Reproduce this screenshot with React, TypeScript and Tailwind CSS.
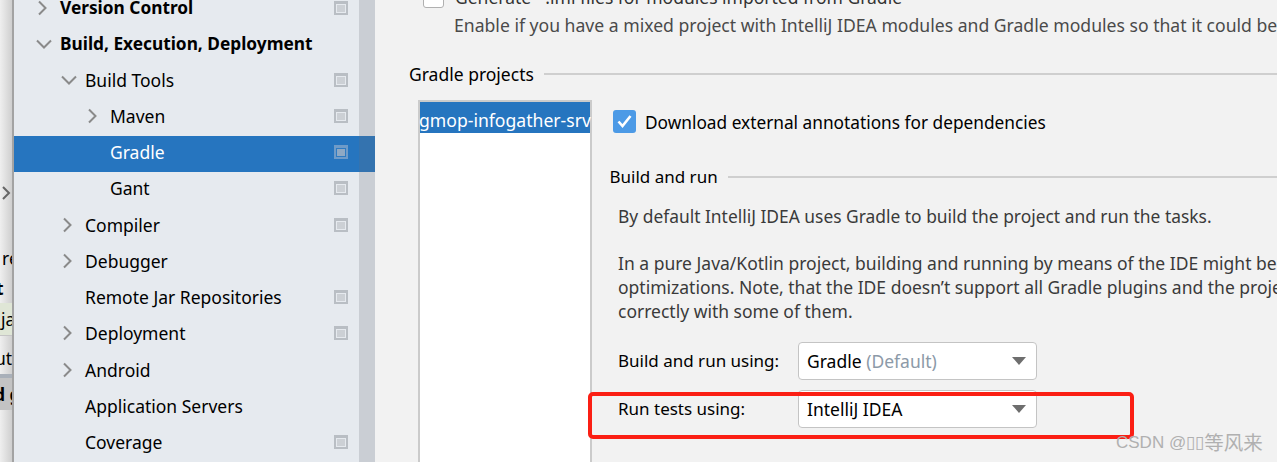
const font = "font-['Noto_Sans','Open_Sans',sans-serif]";

type Row = {
  label: string;
  indent: number;
  arrow?: "right" | "down";
  bold?: boolean;
  page?: boolean;
  selected?: boolean;
};

const rows: Row[] = [
  { label: "Version Control", indent: 0, arrow: "right", bold: true, page: true },
  { label: "Build, Execution, Deployment", indent: 0, arrow: "down", bold: true },
  { label: "Build Tools", indent: 1, arrow: "down", page: true },
  { label: "Maven", indent: 2, arrow: "right", page: true },
  { label: "Gradle", indent: 2, page: true, selected: true },
  { label: "Gant", indent: 2, page: true },
  { label: "Compiler", indent: 1, arrow: "right", page: true },
  { label: "Debugger", indent: 1, arrow: "right" },
  { label: "Remote Jar Repositories", indent: 1, page: true },
  { label: "Deployment", indent: 1, arrow: "right", page: true },
  { label: "Android", indent: 1, arrow: "right" },
  { label: "Application Servers", indent: 1 },
  { label: "Coverage", indent: 1, page: true },
];

function Arrow({ dir }: { dir: "right" | "down" }) {
  return (
    <svg width="18" height="16" viewBox="0 0 18 16" fill="none" stroke="#8a8a8a" strokeWidth="2">
      {dir === "right" ? <path d="M5 1.5l6.5 6.5-6.5 6.5" /> : <path d="M3 4.5l7 7 7-7" />}
    </svg>
  );
}

function PageIcon({ selected }: { selected?: boolean }) {
  return (
    <div className={`flex h-[14px] w-[14px] flex-col border-2 border-t-[3px] ${selected ? "border-[#6f9bc8] bg-[#2f7bc2]" : "border-[#b9bec4] bg-[#e6eaef]"}`}>
      <div className={`m-[1px] flex-1 ${selected ? "bg-[#8fa9c4]" : "bg-[#ccd0d5]"}`} />
    </div>
  );
}

function TreeRow({ row }: { row: Row }) {
  const pad = row.indent === 0 ? "pl-[20px]" : row.indent === 1 ? "pl-[45px]" : "pl-[70px]";
  return (
    <div className={`flex h-[36.25px] shrink-0 items-center ${row.bold ? "pb-[2px]" : "pb-[4px]"} ${pad} ${row.selected ? "bg-[#2675bf] text-white" : "text-black"}`}>
      <div className="flex w-[26px] shrink-0 items-center">{row.arrow && <Arrow dir={row.arrow} />}</div>
      <span className={`flex-1 whitespace-nowrap ${row.bold ? "text-[17.3px] font-bold" : ""}`}>{row.label}</span>
      {row.page && <div className="mr-[27px]"><PageIcon selected={row.selected} /></div>}
    </div>
  );
}

function Combo({ value, hint }: { value: string; hint?: string }) {
  return (
    <div className="flex h-[38px] w-[239px] items-center justify-between rounded-[4px] border border-[#c4c4c4] bg-white pl-[8px] pr-[10px] text-[17.5px] text-black">
      <span>
        {value}
        {hint && <span className="text-[#8c9aa8]"> {hint}</span>}
      </span>
      <div className="h-0 w-0 border-x-[7.5px] border-t-[8px] border-x-transparent border-t-[#6e6e6e]" />
    </div>
  );
}

function Titled({ title, className }: { title: string; className: string }) {
  return (
    <div className={`flex items-center gap-[10px] whitespace-nowrap ${className}`}>
      <span className="text-black">{title}</span>
      <div className="h-[2px] flex-1 bg-[#cfcfcf]" />
    </div>
  );
}

export default function App() {
  return (
    <div className={`relative flex h-[462px] w-[1277px] overflow-hidden bg-[#f2f2f2] text-[17.5px] leading-[24px] ${font}`}>
      {/* dimmed window behind the settings dialog */}
      <div className="flex w-[14px] shrink-0 flex-col overflow-hidden border-r-2 border-[#a3a3a3] bg-[linear-gradient(to_right,#efefef,#cfcfcf)] pt-[181px] text-black">
        <div className="flex h-[24px] w-full items-center">
          <svg width="12" height="16" viewBox="0 0 12 16" fill="none" stroke="#666" strokeWidth="2"><path d="M3 2l6 6-6 6" /></svg>
        </div>
        <div className="ml-[2px] mt-[41px] h-[24px] whitespace-nowrap">re</div>
        <div className="-ml-[4px] mt-[6px] h-[24px] whitespace-nowrap font-bold">t</div>
        <div className="mt-[3px] flex h-[33px] w-full shrink-0 items-center whitespace-nowrap border-b border-[#c5c5c5] bg-[#dfe6d6] pb-[1px]">
          <span className="ml-[1px]">ja</span>
        </div>
        <div className="-ml-[5px] mt-[10px] h-[24px] whitespace-nowrap">utp</div>
        <div className="mt-[4px] flex h-[36px] w-full shrink-0 items-center whitespace-nowrap border-t-[4px] border-[#a9b0b9] bg-[#c3c3c3] font-bold">
          <span className="-ml-[6px]">d g</span>
        </div>
      </div>

      {/* settings tree */}
      <div className="relative flex w-[361px] shrink-0 flex-col bg-[#e6eaef]">
        <div className="-mt-[9px] flex flex-col">
          {rows.map((row) => (
            <TreeRow key={row.label} row={row} />
          ))}
        </div>
        {/* scrollbar track lies over the rows */}
        <div className="absolute bottom-0 right-0 top-0 w-[16px] bg-[rgba(107,111,118,0.22)]" />
      </div>

      {/* gradle page */}
      <div className="relative flex min-w-0 flex-1 flex-col whitespace-nowrap pl-[34px] text-[#1a1a1a]">
        <div className="-mt-[15px] flex items-center gap-[11px] pl-[14px] text-[#333]">
          <div className="h-[21px] w-[21px] rounded-[3px] border border-[#b0b0b0] bg-white" />
          <span>Generate *.iml files for modules imported from Gradle</span>
        </div>
        <div className="pl-[45px] pt-[4px] text-[17.6px] text-[#4a4a4a]">Enable if you have a mixed project with IntelliJ IDEA modules and Gradle modules so that it could be shared with the team</div>

        <Titled title="Gradle projects" className="mt-[25px]" />

        <div className="mt-[14px] flex flex-1">
          <div className="ml-[9px] w-[174px] shrink-0 border-2 border-b-0 border-[#cbcbcb] bg-white">
            <div className="flex h-[31px] items-center bg-[#2675bf] pt-[4px] text-white"><span className="-ml-[1px] text-[17.6px]">gmop-infogather-srv</span></div>
          </div>

          <div className="flex min-w-0 flex-1 flex-col pl-[18px]">
            <div className="mt-[10px] flex items-start gap-[9px] pl-[3px]">
              <div className="flex h-[23px] w-[23px] items-center justify-center rounded-[3px] bg-[#4c9ae6]">
                <svg width="15" height="13" viewBox="0 0 15 13" fill="none" stroke="white" strokeWidth="2.6"><path d="M1.5 6.5l4 4.5 8-10" /></svg>
              </div>
              <span className="pt-[1px] text-[17.27px] text-black">Download external annotations for dependencies</span>
            </div>

            <Titled title="Build and run" className="mt-[30px] -ml-[0.5px] gap-[9px] text-[17px]" />

            <div className="pl-[8px] pt-[15px] text-[#3a3a3a]">
              <div className="text-[17.4px]">By default IntelliJ IDEA uses Gradle to build the project and run the tasks.</div>
              <div className="mt-[23px]">In a pure Java/Kotlin project, building and running by means of the IDE might be faster, thanks to</div>
              <div>optimizations. Note, that the IDE doesn’t support all Gradle plugins and the project might not work</div>
              <div>correctly with some of them.</div>

              <div className="mt-[19px] flex items-center text-[17px] text-black">
                <span className="w-[180px]">Build and run using:</span>
                <Combo value="Gradle" hint="(Default)" />
              </div>
              <div className="mt-[10px] flex items-center text-[17px] text-black">
                <span className="w-[180px]">Run tests using:</span>
                <Combo value="IntelliJ IDEA" />
              </div>
            </div>
          </div>
        </div>
      </div>

      {/* annotation drawn over the screenshot */}
      <div className="absolute left-[588px] top-[392px] h-[47px] w-[546px] rounded-[5px] border-[4px] border-[#fb1f14]" />
      <div className="absolute left-[1116px] top-[431px] flex items-center font-['Liberation_Sans','Noto_Sans_CJK_SC',sans-serif] text-[17px] text-[#b0b0b0]">
        <span className="whitespace-pre">CSDN @▯▯</span>
        <span className="text-[19.5px]">等风来</span>
      </div>
    </div>
  );
}
